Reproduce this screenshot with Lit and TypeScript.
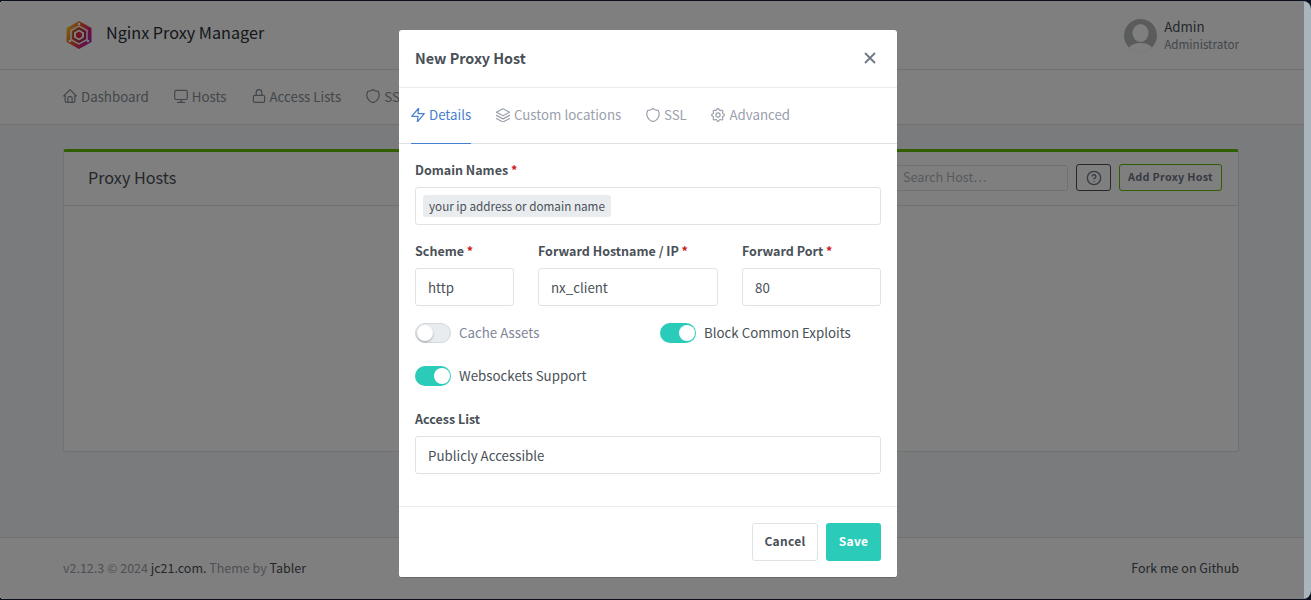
import { LitElement, html, css, svg } from "lit";
import { customElement } from "lit/decorators.js";

const ic = (body: unknown) => html`<svg class="ic" width="14" height="14" viewBox="2 2 20 20" fill="none" stroke="currentColor" stroke-width="1.7" stroke-linecap="round" stroke-linejoin="round">${body}</svg>`;
const home = svg`<path d="M5 12H3l9-9 9 9h-2"/><path d="M5 12v7a2 2 0 0 0 2 2h10a2 2 0 0 0 2-2v-7"/><path d="M9 21v-6a2 2 0 0 1 2-2h2a2 2 0 0 1 2 2v6"/>`;
const monitor = svg`<rect x="3" y="4" width="18" height="13" rx="2"/><path d="M7 21h10M12 17v4"/>`;
const lock = svg`<rect x="4" y="11" width="16" height="10" rx="2"/><path d="M8 11V7a4 4 0 0 1 8 0v4"/>`;
const shield = svg`<path d="M12 2.500a11 11 0 0 0 7.500 3A11 11 0 0 1 12 21.500 11 11 0 0 1 4.500 5.500 11 11 0 0 0 12 2.500"/>`;
const bolt = svg`<path d="M13 2 3 14h9l-1 8 10-12h-9l1-8z"/>`;
const layers = svg`<path d="M12 3 2.500 8 12 13l9.500-5L12 3"/><path d="M2.500 12.500 12 17.500l9.500-5"/><path d="M2.500 17 12 22l9.500-5"/>`;
const gear = svg`<path d="M10.300 4.300c.4-1.800 3-1.800 3.400 0a1.700 1.700 0 0 0 2.600 1.100c1.500-.9 3.300.8 2.400 2.400a1.700 1.700 0 0 0 1 2.500c1.800.4 1.800 3 0 3.400a1.700 1.700 0 0 0-1 2.600c.9 1.500-.9 3.300-2.400 2.400a1.700 1.700 0 0 0-2.600 1c-.4 1.800-3 1.800-3.400 0a1.700 1.700 0 0 0-2.600-1c-1.500.9-3.300-.9-2.400-2.400a1.700 1.700 0 0 0-1-2.600c-1.800-.4-1.800-3 0-3.400a1.700 1.700 0 0 0 1-2.500c-.9-1.600.9-3.300 2.400-2.400a1.700 1.700 0 0 0 2.600-1.100"/><circle cx="12" cy="12" r="3"/>`;

@customElement("app-root")
export class AppRoot extends LitElement {
  static styles = css`
    :host { display: block; height: 600px; overflow: hidden; position: relative; background: #0b0f1e;
      font-family: "Noto Sans CJK JP", "Noto Sans", sans-serif; font-size: 13.3px; line-height: 21px; color: #495057; }
    * { box-sizing: border-box; }
    .ic { flex: none; display: block; }
    .frame { height: 598px; margin-top: 1px; display: flex; border-radius: 4px 8px 8px 4px; overflow: hidden; }
    .page { flex: 1; display: flex; flex-direction: column; min-width: 0; position: relative; background: #f5f7fb; }
    .sb { width: 7px; background: #a9b5bd; }
    .top { height: 69px; background: #fff; border-bottom: 1px solid #dfe2e6; display: flex; align-items: center; justify-content: space-between; padding: 0 65px 0 63px; }
    .brand { display: flex; align-items: center; gap: 13px; font-size: 16.2px; color: #2a2f36; padding-bottom: 3px; }
    .brand svg { margin: 3px 0 0 2px; }
    .brand span { margin-top: -2px; }
    .user { display: flex; align-items: center; gap: 7px; }
    .user-t { display: flex; flex-direction: column; }
    .user-n { color: #495057; font-size: 13.300px; line-height: 18px; }
    .user-r { color: #868e96; font-size: 11.700px; line-height: 16px; }
    .nav { height: 55px; background: #fff; border-bottom: 1px solid #dfe2e6; display: flex; align-items: center; padding: 0 0 2px 63px; gap: 25px; color: #868e96; }
    .nav a { display: flex; align-items: center; gap: 4px; white-space: nowrap; }
    .main { flex: 1; padding: 24px 65px 86px 63px; display: flex; flex-direction: column; }
    .card { flex: 1; background: #fff; border: 1px solid #dfe2e6; border-top: 3px solid #5eba00; border-radius: 3px; display: flex; flex-direction: column; }
    .card-h { height: 54px; border-bottom: 1px solid #dfe2e6; display: flex; align-items: center; padding: 0 16px 2px 24px; }
    .card-t { flex: 1; font-size: 16.200px; color: #495057; }
    .search { width: 177px; height: 26px; margin-right: 8px; border: 1px solid #dfe2e6; border-radius: 3px; background: #fff; color: #adb5bd; font-size: 12.600px; padding: 1px 11px; line-height: 20px; }
    .qbtn { width: 35px; height: 27px; border: 1px solid #495057; border-radius: 3px; display: flex; align-items: center; justify-content: center; color: #6e7687; margin-right: 8px; }
    .addbtn { width: 103px; height: 27px; border: 1px solid #5eba00; border-radius: 3px; display: flex; align-items: center; justify-content: center; font-size: 10.800px; font-weight: 700; letter-spacing: .3px; color: #6e7687; white-space: nowrap; padding-bottom: 2px; }
    .foot { height: 62px; background: #fff; border-top: 1px solid #dfe2e6; display: flex; align-items: center; justify-content: space-between; padding: 0 65px 2px 63px; color: #9aa0ac; margin-top: -1px; font-size: 12.500px; }
    .foot b { font-weight: 400; color: #495057; }
    .overlay { position: absolute; inset: 0; background: rgba(0,0,0,.5); }
    .modal { position: absolute; left: 399px; top: 30px; width: 498px; height: 548px; background: #fff; border-radius: 3px; border-bottom: 1px solid #666; display: flex; flex-direction: column; }
    .m-h { height: 58px; flex: none; border-bottom: 1px solid #e9ecef; display: flex; align-items: center; justify-content: space-between; padding: 0 16px 2px; }
    .m-t { font-size: 14.350px; font-weight: 700; color: #495057; }
    .close { color: #6e7687; margin-right: 5px; }
    .tabs { height: 56px; flex: none; border-bottom: 1px solid #dee2e6; display: flex; padding: 0 12px; gap: 24.7px; color: #9aa0ac; }
    .tab { display: flex; align-items: center; gap: 4px; height: 56px; margin-bottom: -1px; padding-bottom: 2px; white-space: nowrap; border-bottom: 1px solid transparent; }
    .tab.on { color: #467fcf; border-bottom-color: #467fcf; }
    .m-b { flex: 1; padding: 16px 16px 0; display: flex; flex-direction: column; }
    .lab { font-size: 12.500px; font-weight: 700; line-height: 19px; height: 21px; color: #495057; white-space: nowrap; margin-bottom: 6px; }
    .lab i { font-style: normal; color: #cd201f; }
    .inp { height: 38px; border: 1px solid #dfe2e6; border-radius: 3px; background: #fff; display: flex; align-items: center; padding: 0 12px; color: #495057; }
    .inp.dom { padding: 0 7px; }
    .tag { height: 22px; background: #e9ecef; border-radius: 3px; display: flex; align-items: center; padding: 0 6px 2px; font-size: 11.700px; }
    .row3 { display: grid; grid-template-columns: 99px 180px 139px; gap: 24px; margin-top: 16px; }
    .checks { display: grid; grid-template-columns: 245px 1fr; margin-top: 17px; row-gap: 23px; }
    .chk { display: flex; align-items: center; gap: 8px; height: 20px; color: #495057; }
    .chk .t { margin-top: -2px; }
    .chk.off { color: #7e8596; }
    .sw { width: 36px; height: 20px; border-radius: 10px; background: #2bcbba; position: relative; flex: none; }
    .sw::after { content: ""; position: absolute; right: 1px; top: 2px; width: 16px; height: 16px; border-radius: 50%; background: #fff; }
    .sw.off { background: #e9ecef; border: 1px solid #d3d8de; }
    .sw.off::after { right: auto; left: 1px; top: 1px; box-shadow: 0 1px 2px rgba(0,0,0,.3); }
    .acc { margin-top: 23px; }
    .m-f { height: 71px; flex: none; border-top: 1px solid #e9ecef; display: flex; justify-content: flex-end; align-items: flex-start; padding: 16px 16px 0; gap: 8px; }
    .btn { height: 38px; border-radius: 3px; display: flex; align-items: center; justify-content: center; font-size: 12px; font-weight: 700; letter-spacing: .3px; padding-bottom: 3px; }
    .btn.c { width: 66px; border: 1px solid #dfe2e6; color: #495057; background: #fff; }
    .btn.s { width: 55px; background: #2bcbba; color: #fff; }
  `;

  render() {
    return html`
      <div class="frame">
        <div class="page">
          <div class="top">
            <div class="brand">
              <svg width="28" height="30" viewBox="0 0 28 30" fill="none">
                <defs><linearGradient id="g" x1="0" y1="0.2" x2="1" y2="0.8"><stop offset="0" stop-color="#f2d52a"/><stop offset=".4" stop-color="#ef5a26"/><stop offset=".75" stop-color="#d4207f"/><stop offset="1" stop-color="#9a28b8"/></linearGradient></defs>
                <path d="M14 1 26.500 8v14L14 29 1.500 22V8Z" fill="url(#g)"/>
                <path d="M14 6 22 10.500v9L14 24l-8-4.500v-9Z" fill="none" stroke="#fff" stroke-width="1.400"/>
                <path d="M14 7.800 20.500 11.500v7L14 22.200 7.500 18.500v-7Z" fill="#2a1830" fill-opacity=".35"/>
                <path d="M14 9.500 19 12.400v5.200L14 20.500 9 17.600v-5.200Z" fill="#fff"/>
                <path d="M14 11.500 17 13.200v3.600L14 18.500 11 16.800v-3.600Z" fill="#e8263c"/>
                <circle cx="14" cy="4" r="1.300" fill="#fff"/><circle cx="5" cy="21" r="1.300" fill="#fff"/><circle cx="23" cy="21" r="1.300" fill="#fff"/>
              </svg>
              <span>Nginx Proxy Manager</span>
            </div>
            <div class="user">
              <svg width="33" height="33" viewBox="0 0 33 33"><defs><clipPath id="av"><circle cx="16.500" cy="16.500" r="16.500"/></clipPath></defs><circle cx="16.500" cy="16.500" r="16.500" fill="#b5b7ba"/><g clip-path="url(#av)"><ellipse cx="16.500" cy="14" rx="8" ry="9" fill="#fff"/><path d="M3 33c1-6 7-9 13.500-9S29 27 30 33Z" fill="#fff"/></g></svg>
              <div class="user-t"><span class="user-n">Admin</span><span class="user-r">Administrator</span></div>
            </div>
          </div>
          <div class="nav">
            <a>${ic(home)}Dashboard</a><a>${ic(monitor)}Hosts</a><a>${ic(lock)}Access Lists</a><a>${ic(shield)}SSL</a>
          </div>
          <div class="main">
            <div class="card">
              <div class="card-h">
                <div class="card-t">Proxy Hosts</div>
                <div class="search">Search Host…</div>
                <div class="qbtn"><svg width="16" height="16" viewBox="0 0 24 24" fill="none" stroke="currentColor" stroke-width="2" stroke-linecap="round" stroke-linejoin="round"><circle cx="12" cy="12" r="10"/><path d="M9.100 9a3 3 0 0 1 5.800 1c0 2-3 3-3 3M12 17h.01"/></svg></div>
                <div class="addbtn">Add Proxy Host</div>
              </div>
            </div>
          </div>
          <div class="foot">
            <span>v2.12.3 © 2024 <b>jc21.com.</b> Theme by <b>Tabler</b></span>
            <b>Fork me on Github</b>
          </div>
          <div class="overlay"></div>
        </div>
        <div class="sb"></div>
      </div>
      <div class="modal">
        <div class="m-h">
          <div class="m-t">New Proxy Host</div>
          <svg class="close" width="12" height="12" viewBox="0 0 12 12" fill="none" stroke="currentColor" stroke-width="1.800" stroke-linecap="round"><path d="M1.500 1.500l9 9M10.500 1.500l-9 9"/></svg>
        </div>
        <div class="tabs">
          <div class="tab on">${ic(bolt)}Details</div>
          <div class="tab">${ic(layers)}Custom locations</div>
          <div class="tab">${ic(shield)}SSL</div>
          <div class="tab">${ic(gear)}Advanced</div>
        </div>
        <div class="m-b">
          <div class="lab">Domain Names <i>*</i></div>
          <div class="inp dom"><span class="tag">your ip address or domain name</span></div>
          <div class="row3">
            <div><div class="lab">Scheme <i>*</i></div><div class="inp">http</div></div>
            <div><div class="lab">Forward Hostname / IP <i>*</i></div><div class="inp">nx_client</div></div>
            <div><div class="lab">Forward Port <i>*</i></div><div class="inp">80</div></div>
          </div>
          <div class="checks">
            <div class="chk off"><span class="sw off"></span><span class="t">Cache Assets</span></div>
            <div class="chk"><span class="sw"></span><span class="t">Block Common Exploits</span></div>
            <div class="chk"><span class="sw"></span><span class="t">Websockets Support</span></div>
          </div>
          <div class="acc">
            <div class="lab">Access List</div>
            <div class="inp">Publicly Accessible</div>
          </div>
        </div>
        <div class="m-f">
          <div class="btn c">Cancel</div>
          <div class="btn s">Save</div>
        </div>
      </div>
    `;
  }
}
